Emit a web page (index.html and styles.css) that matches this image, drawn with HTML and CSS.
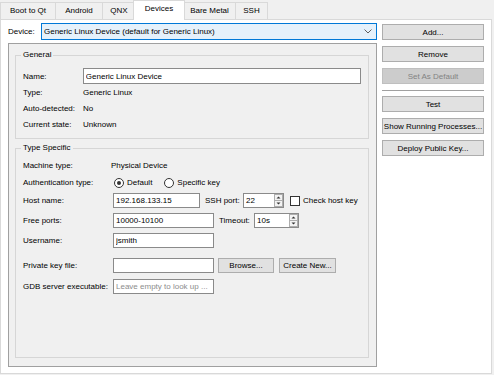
FILE: index.html
```html
<!DOCTYPE html>
<html>
<head>
<meta charset="utf-8">
<link rel="stylesheet" href="styles.css">
</head>
<body>
<div class="tabbar">
  <div class="tab w-boot">Boot to Qt</div>
  <div class="tab w-android">Android</div>
  <div class="tab w-qnx">QNX</div>
  <div class="tab active w-devices">Devices</div>
  <div class="tab w-bare">Bare Metal</div>
  <div class="tab w-ssh">SSH</div>
</div>
<div class="pane">
  <div class="main">
    <div class="device-row">
      <span class="device-label">Device:</span>
      <div class="combo">
        <span>Generic Linux Device (default for Generic Linux)</span>
        <svg class="chev" width="8" height="5" viewBox="0 0 8 5"><path d="M0.5 0.5 L4 4 L7.5 0.5" fill="none" stroke="#606060" stroke-width="1"/></svg>
      </div>
    </div>
    <div class="frame">
      <fieldset class="group general">
        <legend>General</legend>
        <div class="row r-name">
          <span class="lbl lbl-g">Name:</span>
          <input class="field f-name" value="Generic Linux Device">
        </div>
        <div class="row r-plain"><span class="lbl lbl-g">Type:</span><span>Generic Linux</span></div>
        <div class="row r-plain"><span class="lbl lbl-g">Auto-detected:</span><span>No</span></div>
        <div class="row r-plain"><span class="lbl lbl-g">Current state:</span><span>Unknown</span></div>
      </fieldset>
      <fieldset class="group typespec">
        <legend>Type Specific</legend>
        <div class="row r-tall"><span class="lbl lbl-t">Machine type:</span><span class="val-shift">Physical Device</span></div>
        <div class="row r-tall">
          <span class="lbl lbl-t">Authentication type:</span>
          <span class="radio"><span class="circle checked"></span>Default</span>
          <span class="radio r2"><span class="circle"></span>Specific key</span>
        </div>
        <div class="row r-in r-host">
          <span class="lbl lbl-t">Host name:</span>
          <input class="field f-host" value="192.168.133.15">
          <span class="lbl-ssh">SSH port:</span>
          <div class="spin s-ssh"><span class="spin-val">22</span><svg class="arrows" width="9" height="13" viewBox="0 0 9 13"><rect x="0.5" y="0.5" width="8" height="12" fill="#f3f3f3" stroke="#adadad"/><line x1="0" y1="6.5" x2="9" y2="6.5" stroke="#adadad"/><path d="M2.5 4.5 L4.5 2.5 L6.5 4.5Z" fill="#333"/><path d="M2.5 8.5 L4.5 10.5 L6.5 8.5Z" fill="#333"/></svg></div>
          <span class="check"></span><span>Check host key</span>
        </div>
        <div class="row r-in">
          <span class="lbl lbl-t">Free ports:</span>
          <input class="field f-std" value="10000-10100">
          <span class="lbl-timeout">Timeout:</span>
          <div class="spin s-timeout"><span class="spin-val">10s</span><svg class="arrows" width="9" height="13" viewBox="0 0 9 13"><rect x="0.5" y="0.5" width="8" height="12" fill="#f3f3f3" stroke="#adadad"/><line x1="0" y1="6.5" x2="9" y2="6.5" stroke="#adadad"/><path d="M2.5 4.5 L4.5 2.5 L6.5 4.5Z" fill="#333"/><path d="M2.5 8.5 L4.5 10.5 L6.5 8.5Z" fill="#333"/></svg></div>
        </div>
        <div class="row r-in">
          <span class="lbl lbl-t">Username:</span>
          <input class="field f-std" value="jsmith">
        </div>
        <div class="row r-in r-key">
          <span class="lbl lbl-t">Private key file:</span>
          <input class="field f-std" value="">
          <button class="btn b-browse">Browse...</button>
          <button class="btn b-create">Create New...</button>
        </div>
        <div class="row r-in r-gdb">
          <span class="lbl lbl-t">GDB server executable:</span>
          <input class="field f-std" placeholder="Leave empty to look up ...">
        </div>
      </fieldset>
    </div>
  </div>
  <div class="side">
    <button class="btn sbtn">Add...</button>
    <button class="btn sbtn">Remove</button>
    <button class="btn sbtn disabled">Set As Default</button>
    <div class="sep"></div>
    <button class="btn sbtn b-test">Test</button>
    <button class="btn sbtn">Show Running Processes...</button>
    <button class="btn sbtn">Deploy Public Key...</button>
  </div>
</div>
</body>
</html>
```
FILE: styles.css
```css
* { box-sizing: border-box; }
html, body { margin: 0; padding: 0; }
body {
  width: 494px;
  height: 375px;
  overflow: hidden;
  background: #f0f0f0;
  font-family: "Liberation Sans", Arial, sans-serif;
  font-size: 8px;
  color: #000;
}

/* tabs */
.tabbar { display: flex; align-items: flex-end; height: 19px; }
.tab {
  height: 17px;
  border: 1px solid #d9d9d9;
  border-bottom: none;
  background: #f0f0f0;
  display: flex;
  align-items: center;
  justify-content: center;
  padding-bottom: 2px;
  margin-left: -1px;
  white-space: nowrap;
}
.tab:first-child { margin-left: 0; }
.tab.active {
  height: 20px;
  background: #fff;
  margin-bottom: -1px;
  margin-left: -3px;
  margin-right: -1px;
  padding-bottom: 4px;
  position: relative;
  z-index: 1;
}
.w-boot { width: 56px; }
.w-android { width: 48px; }
.w-qnx { width: 34px; }
.w-devices { width: 52px; }
.w-bare { width: 53px; }
.w-ssh { width: 33px; }

/* pane */
.pane {
  width: 492px;
  height: 355px;
  border: 1px solid #d9d9d9;
  background: #fff;
  display: flex;
  padding: 3px 0 0 7px;
}
.main { width: 369px; display: flex; flex-direction: column; }
.device-row { height: 17px; display: flex; align-items: center; }
.device-label { width: 33px; }
.combo {
  flex: 1;
  height: 17px;
  border: 1px solid #0078d7;
  background: #e5f1fb;
  display: flex;
  align-items: center;
  padding-left: 2px;
}
.chev { margin-left: auto; margin-right: 4px; }

.frame {
  margin-top: 3px;
  height: 324px;
  border: 1px solid #a0a0a0;
  background: #f0f0f0;
  padding: 0 7px 8px 6px;
  display: flex;
  flex-direction: column;
}
.group {
  margin: 0;
  border: 1px solid #d6d6d6;
  padding: 8px 7px 6px 7px;
  min-width: 0;
}
.group legend {
  padding: 0 2px;
  margin-left: -2px;
  line-height: 10px;
  height: 10px;
}
.general { margin-top: 6px; }
.typespec { margin-top: 4px; flex: 1; padding-top: 4px; }

.row { display: flex; align-items: center; white-space: nowrap; }
.r-name { height: 16px; }
.r-plain { height: 16px; }
.r-tall { height: 17px; }
.r-in { height: 15px; margin-top: 5px; }
.r-host { margin-top: 2px; }
.r-key { margin-top: 10px; }
.r-gdb { margin-top: 6px; }
.lbl-g { width: 60px; }
.lbl-t { width: 90px; }
.val-shift { margin-left: -2px; }

.field {
  font: inherit;
  color: #000;
  height: 100%;
  border: 1px solid #8a8a8a;
  background: #fff;
  padding: 0 0 0 2px;
  margin: 0;
  outline: none;
}
.field::placeholder { color: #8c8c8c; }
.f-name { width: 279px; height: 16px; }
.f-host { width: 87px; }
.f-std { width: 101px; }

.lbl-ssh { margin-left: 5px; width: 38px; }
.lbl-timeout { margin-left: 5px; width: 35px; }
.spin {
  height: 100%;
  border: 1px solid #8a8a8a;
  background: #fff;
  display: flex;
  align-items: center;
  padding-left: 2px;
}
.spin-val { flex: 1; }
.s-ssh { width: 41px; }
.s-timeout { width: 45px; }
.check {
  width: 10px;
  height: 10px;
  border: 1px solid #333;
  background: #fff;
  margin: 0 3px 0 6px;
}

.radio { display: flex; align-items: center; }
.radio.r2 { margin-left: 11px; }
.circle {
  width: 10px;
  height: 10px;
  border: 1px solid #333;
  border-radius: 50%;
  background: #fff;
  margin: 0 3px 0 1px;
  display: flex;
  align-items: center;
  justify-content: center;
}
.circle.checked::after {
  content: "";
  width: 4px;
  height: 4px;
  border-radius: 50%;
  background: #333;
}

.btn {
  font: inherit;
  color: #000;
  background: #e1e1e1;
  border: 1px solid #adadad;
  padding: 0;
  margin: 0;
  white-space: nowrap;
}
.b-browse { width: 56px; height: 100%; margin-left: 4px; }
.b-create { width: 57px; height: 100%; margin-left: 5px; }

.side {
  width: 102px;
  margin-left: 5px;
  padding-top: 1px;
  display: flex;
  flex-direction: column;
  gap: 6px;
}
.sbtn { height: 16px; }
.sbtn.disabled { background: #cccccc; border-color: #bfbfbf; color: #838383; }
.sep { height: 1px; background: #a0a0a0; }
.b-test { margin-top: -1px; }
```
